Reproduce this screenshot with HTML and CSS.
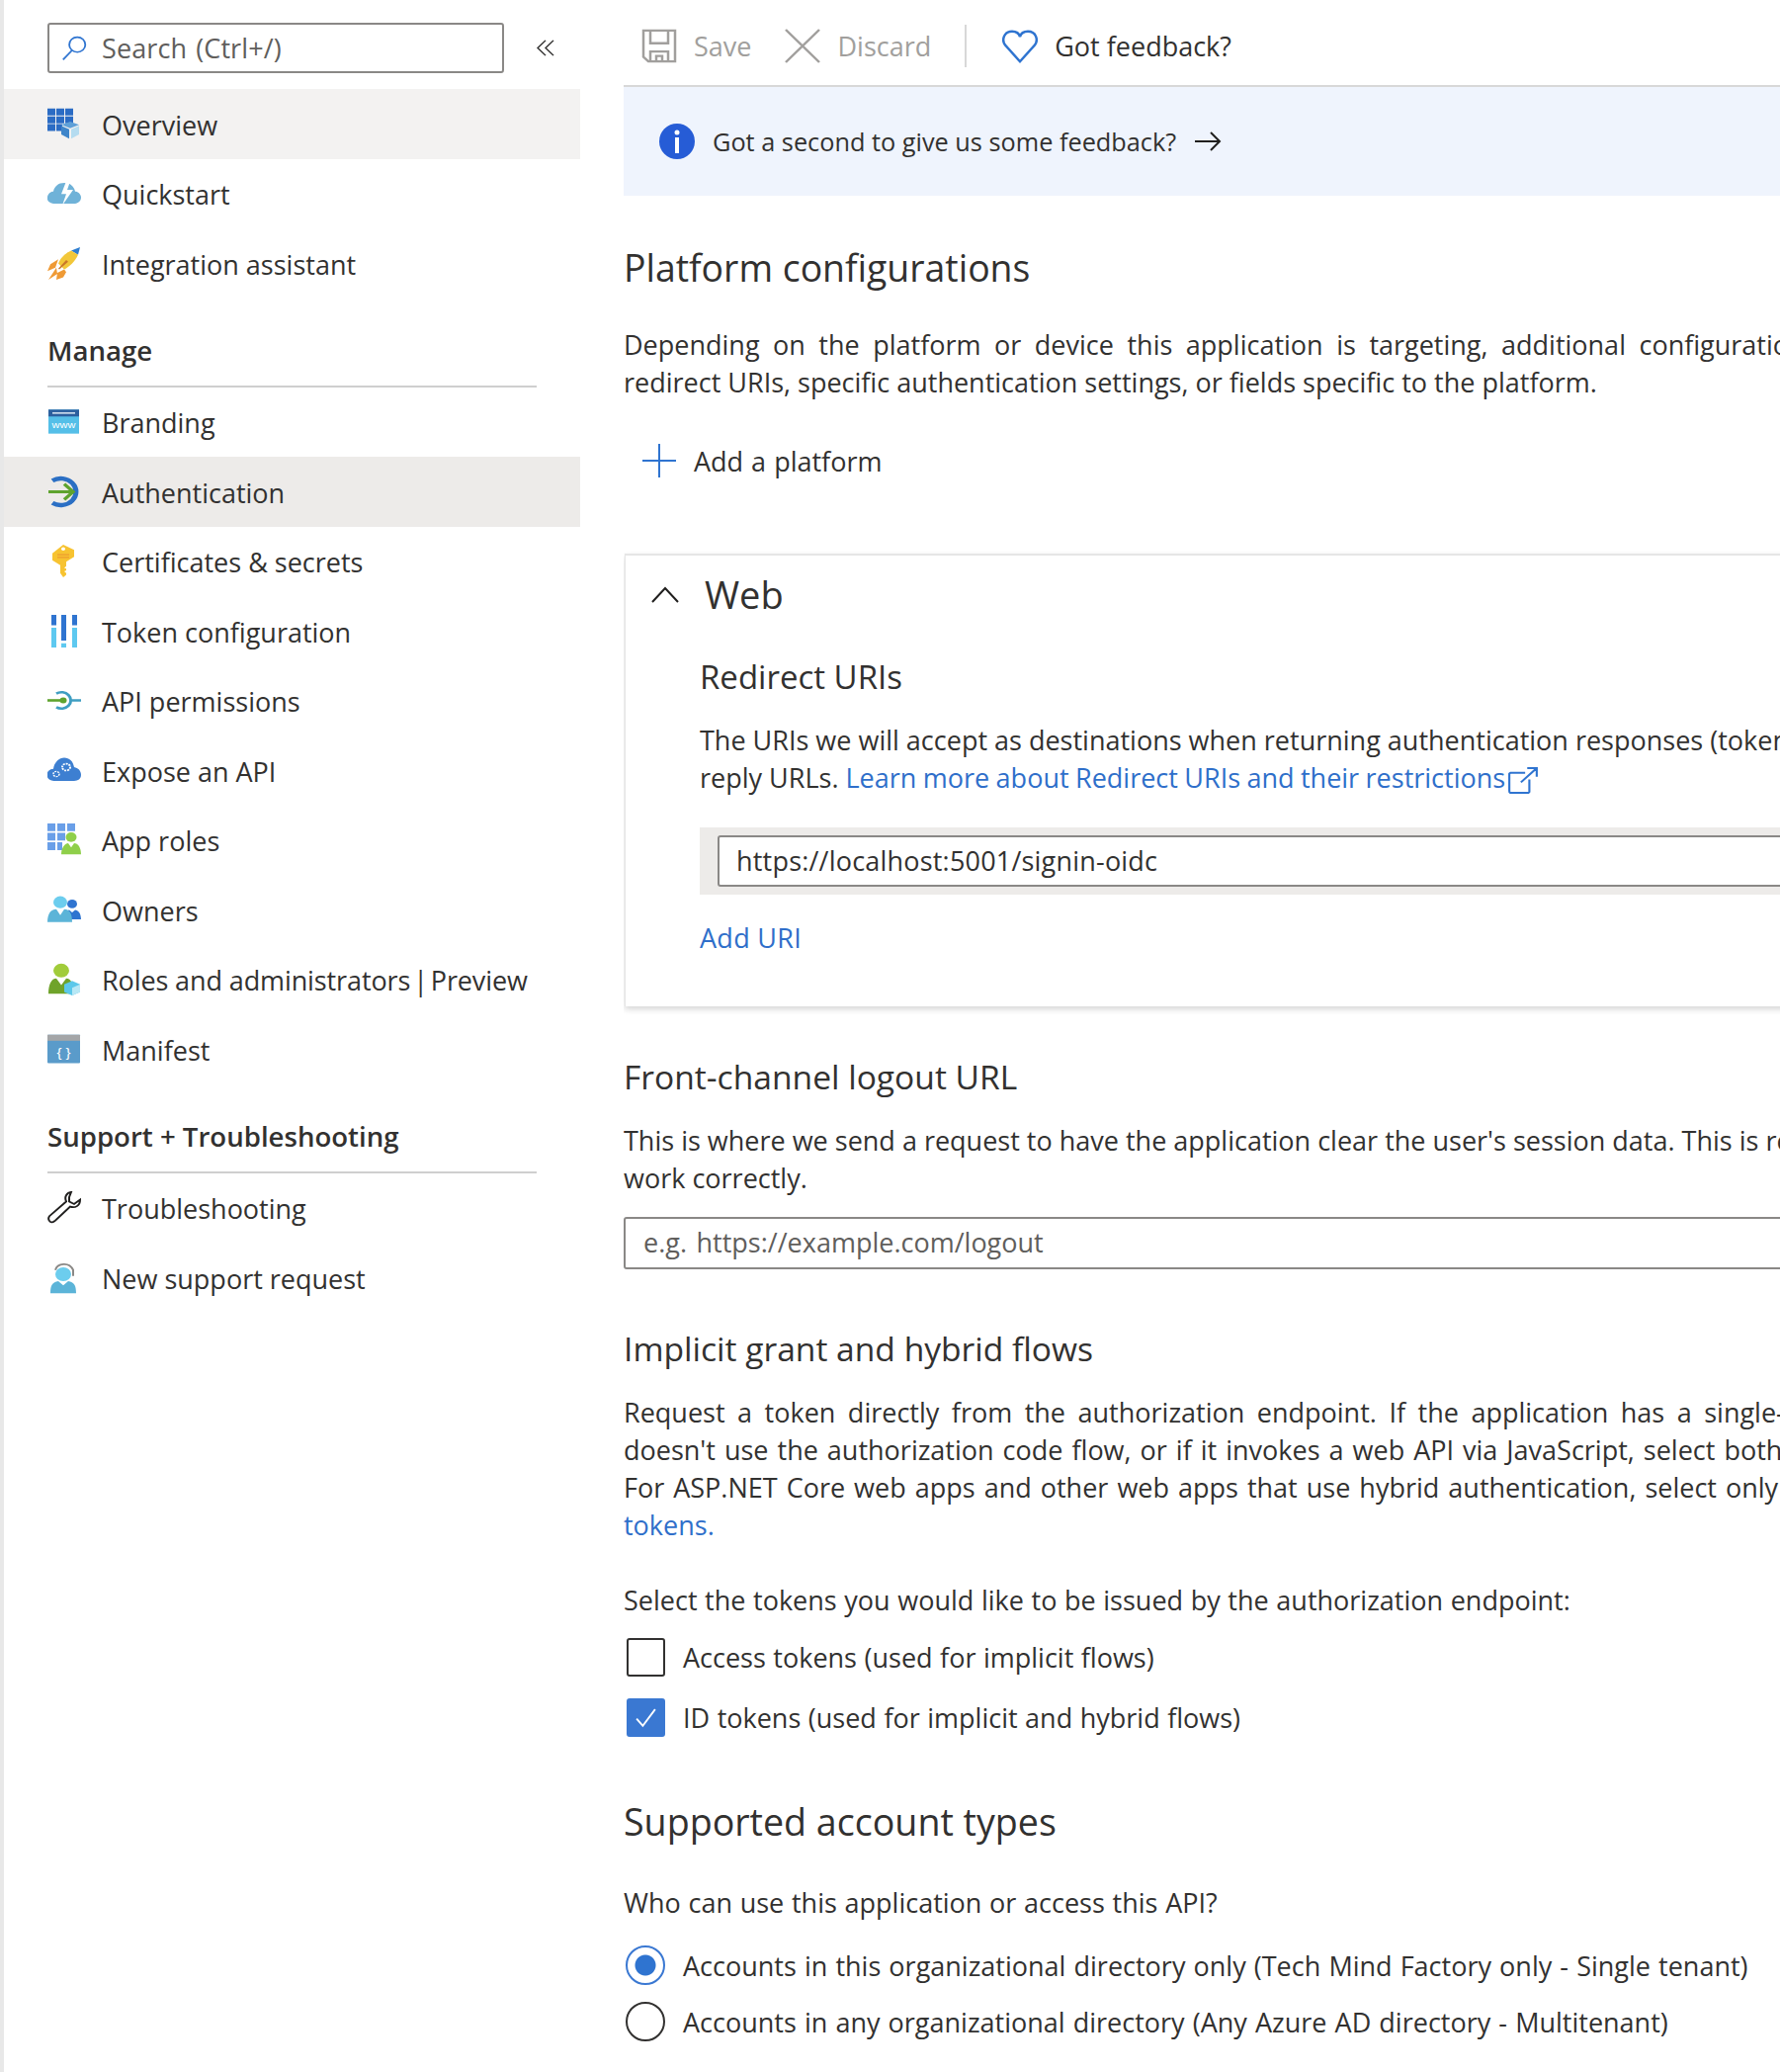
FILE: index.html
```html
<!DOCTYPE html>
<html lang="en">
<head>
  <meta charset="UTF-8">
  <title>Authentication</title>
  <link rel="stylesheet" href="styles.css">
</head>
<body>
  <!-- Left menu -->
  <nav class="sidebar">
    <div class="search-row">
      <div class="search-box">
        <svg class="search-icon" viewBox="0 0 30 32" preserveAspectRatio="none"><circle cx="18" cy="12" r="9" fill="none" stroke="#2f74d0" stroke-width="2"/><path d="M12 19 2 30" stroke="#2f74d0" stroke-width="2" fill="none"/></svg>
        <span>Search (Ctrl+/)</span>
      </div>
      <svg class="collapse-icon" viewBox="0 0 18 20" preserveAspectRatio="none"><path d="M9 1 1 10l8 9M17 1l-8 9 8 9" fill="none" stroke="#323130" stroke-width="1.5"/></svg>
    </div>

    <a class="nav-item hover">
      <svg class="nav-icon" viewBox="0 0 34 38" preserveAspectRatio="none"><path fill="#2b6cc4" d="M0 1h8v8H0zM9 1h8v8H9zM18 1h8v8h-8zM0 10h8v8H0zM9 10h8v8H9zM18 10h8v8h-8zM0 19h8v8H0zM9 19h6v8H9z"/><path fill="#5ea0d8" d="m23 16 9 4-9 4-9-4z"/><path fill="#3f86ca" d="m14 21 8 4v11l-8-5z"/><path fill="#b5dcf0" d="m24 25 8-4v10l-8 5z"/></svg>
      <span>Overview</span>
    </a>
    <a class="nav-item">
      <svg class="nav-icon" viewBox="0 0 34 38" preserveAspectRatio="none"><path fill="#6fb2d8" d="M6 31a6 6 0 0 1-6-7c0-4 3-7 6-7 1-6 5-10 11-10 6 0 10 4 11 10 3 0 6 3 6 7s-3 7-6 7z"/><path fill="#fff" d="M20 2 14 20h5l-4 13 11-18h-6l4-13z"/></svg>
      <span>Quickstart</span>
    </a>
    <a class="nav-item">
      <svg class="nav-icon" viewBox="0 0 34 38" preserveAspectRatio="none"><path fill="#2f7ed0" d="m33 0-2 9-7-5z"/><path fill="#f2c73a" d="M24 4l7 5c-3 8-9 14-14 17l-6-7c2-6 7-12 13-15z"/><path fill="#ef9a35" d="M11 14 3 20l-3 8 8-4zM17 26l-7 4-1 8 7-3 3-6zM9 24l-8 14 9-7z"/><path fill="#c9772a" d="m19 15-8 10 1 1 9-9z"/></svg>
      <span>Integration assistant</span>
    </a>

    <h3 class="nav-heading">Manage</h3>
    <a class="nav-item">
      <svg class="nav-icon" viewBox="0 0 34 38" preserveAspectRatio="none"><rect x="1" y="5" width="31" height="28" fill="#55bfe8"/><rect x="1" y="5" width="31" height="8" fill="#2c5f9e"/><rect x="5" y="8" width="23" height="2" fill="#c8d8ea"/><text x="16.5" y="27" class="icon-text">www</text></svg>
      <span>Branding</span>
    </a>
    <a class="nav-item active">
      <svg class="nav-icon" viewBox="0 0 34 38" preserveAspectRatio="none"><path fill="none" stroke="#2b6fc4" stroke-width="5" d="M5 6a15.500 15.500 0 1 1 0 26"/><path fill="none" stroke="#5ea32e" stroke-width="3.500" d="M1 19h25M17 10l9 9-9 9"/></svg>
      <span>Authentication</span>
    </a>
    <a class="nav-item">
      <svg class="nav-icon" viewBox="0 0 34 38" preserveAspectRatio="none"><path fill="#f7c331" d="M16 0 5 10v8l8 6v9l3 5 3-3v-2l-2-2 2-1v-2l-2-1 2-2v-5l8-6v-8z"/><circle cx="16" cy="5" r="2" fill="#fff"/><path fill="#ee9c2f" d="M10 11h12v1.500H10zM10 14h12v1.500H10z"/></svg>
      <span>Certificates &amp; secrets</span>
    </a>
    <a class="nav-item">
      <svg class="nav-icon" viewBox="0 0 34 38" preserveAspectRatio="none"><path fill="#2f74d0" d="M4 0h5v12H4zM14 0h5v30h-5zM25 0h5v12h-5z"/><path fill="#5ec9f0" d="M4 15h5v23H4zM14 33h5v5h-5zM25 15h5v23h-5z"/></svg>
      <span>Token configuration</span>
    </a>
    <a class="nav-item">
      <svg class="nav-icon" viewBox="0 0 34 38" preserveAspectRatio="none"><path fill="none" stroke="#3f9ec2" stroke-width="3" d="M9 11a9.500 9.500 0 1 1 0 16M24 19h10"/><path fill="none" stroke="#5ea32e" stroke-width="3" d="M0 19h17"/><circle cx="16" cy="19" r="3.500" fill="#5ea32e"/></svg>
      <span>API permissions</span>
    </a>
    <a class="nav-item">
      <svg class="nav-icon" viewBox="0 0 34 38" preserveAspectRatio="none"><path fill="#3d7fd1" d="M7 31a7 7 0 0 1-1-14c1-8 6-13 11-13 5 0 9 4 10 11 4 1 7 4 7 9s-3 7-7 7z"/><circle cx="19" cy="15" r="4" fill="none" stroke="#fff" stroke-width="2" stroke-dasharray="2 1"/><circle cx="9" cy="23" r="3" fill="none" stroke="#fff" stroke-width="1.500" stroke-dasharray="2 1"/></svg>
      <span>Expose an API</span>
    </a>
    <a class="nav-item">
      <svg class="nav-icon" viewBox="0 0 34 38" preserveAspectRatio="none"><path fill="#6a9fe8" d="M0 0h8v9H0zM10 0h8v9h-8zM20 0h8v9h-8zM0 11h8v9H0zM10 11h8v9h-8zM0 22h8v9H0zM10 22h5v9h-5z"/><circle cx="24" cy="16" r="5.500" fill="#8fcf4a"/><path fill="#8fcf4a" d="M14 36c0-8 4-13 7-13l3 5 3-5c4 0 7 5 7 13z"/></svg>
      <span>App roles</span>
    </a>
    <a class="nav-item">
      <svg class="nav-icon" viewBox="0 0 34 38" preserveAspectRatio="none"><circle cx="25" cy="12" r="5" fill="#2f74d0"/><path fill="#2f74d0" d="M17 30c0-7 3-11 5-11l3 3 3-3c3 0 6 4 6 11z"/><circle cx="13" cy="10" r="7" fill="#6ccdee"/><path fill="#5cb4d8" d="M0 33c0-9 3-15 9-15l4 7 4-7c6 0 8 6 8 15z"/></svg>
      <span>Owners</span>
    </a>
    <a class="nav-item">
      <svg class="nav-icon" viewBox="0 0 34 38" preserveAspectRatio="none"><circle cx="14" cy="9" r="8" fill="#a1cc3a"/><path fill="#6fa32a" d="M1 36c0-11 3-18 8-18l5 8 5-8c5 0 7 6 8 18z"/><path fill="#5cc8ea" d="m25 21 8 4v9l-8 4-8-4v-9z"/><path fill="#b8e8f5" d="m25 29 8-4v9l-8 4z"/></svg>
      <span class="tight">Roles and administrators<span class="pipe"> | </span>Preview</span>
    </a>
    <a class="nav-item">
      <svg class="nav-icon" viewBox="0 0 34 38" preserveAspectRatio="none"><rect y="2" width="33" height="33" rx="1" fill="#5a9bca"/><rect y="2" width="33" height="7" fill="#a4a6a8"/><text x="16.500" y="28" class="icon-text braces">{ }</text></svg>
      <span>Manifest</span>
    </a>

    <h3 class="nav-heading">Support + Troubleshooting</h3>
    <a class="nav-item">
      <svg class="nav-icon" viewBox="0 0 34 38" preserveAspectRatio="none"><path fill="none" stroke="#201f1e" stroke-width="2" d="M24 1c-5 1-7 6-5 11L2 29c-2 3 0 8 3 7 1 0 2-1 3-2l15-16c5 2 10-1 10-8l-6 5-5-3 0-5z"/></svg>
      <span>Troubleshooting</span>
    </a>
    <a class="nav-item">
      <svg class="nav-icon" viewBox="0 0 34 38" preserveAspectRatio="none"><path fill="none" stroke="#8a8886" stroke-width="2" d="M8 10c2-8 14-10 18 0v7"/><circle cx="16" cy="15" r="8" fill="#6ccdee"/><path fill="#5cb4d8" d="M3 37c0-9 2-13 8-14l5 5 5-5c6 1 8 5 8 14z"/></svg>
      <span>New support request</span>
    </a>
  </nav>

  <main class="main">
    <div class="toolbar">
      <span class="tool disabled">
        <svg class="tool-icon" viewBox="0 0 36 38" preserveAspectRatio="none"><path fill="none" stroke="#a19f9d" stroke-width="2.500" d="M2 2h32v34H7l-5-5zM9 2v14h18V2M9 36V25h18v11M15 36v-6h6v6"/></svg>
        Save
      </span>
      <span class="tool disabled">
        <svg class="tool-icon" viewBox="0 0 36 38" preserveAspectRatio="none"><path fill="none" stroke="#a19f9d" stroke-width="2.500" d="m1 1 34 36M35 1 1 37"/></svg>
        Discard
      </span>
      <span class="tool-divider"></span>
      <span class="tool">
        <svg class="tool-icon" viewBox="0 0 36 38" preserveAspectRatio="none"><path fill="none" stroke="#2f74d0" stroke-width="2.500" d="M18 36 3 18C-1 12 2 3 10 3c4 0 7 2 8 6 1-4 4-6 8-6 8 0 11 9 7 15z"/></svg>
        Got feedback?
      </span>
    </div>

    <div class="banner">
      <svg class="info-icon" viewBox="0 0 36 36"><circle cx="18" cy="18" r="18" fill="#265cd6"/><circle cx="18" cy="9" r="2.500" fill="#fff"/><rect x="16" y="14" width="4" height="16" fill="#fff"/></svg>
      <span>Got a second to give us some feedback?</span>
      <svg class="arrow-icon" viewBox="0 0 28 20"><path fill="none" stroke="#201f1e" stroke-width="2" d="M1 10h25M17 1l9 9-9 9"/></svg>
    </div>

    <h2 class="title">Platform configurations</h2>
    <p class="text text-under-title"><span class="wide-a">Depending on the platform or device this application is targeting, additional configuration may be required such as</span><br>redirect URIs, specific authentication settings, or fields specific to the platform.</p>

    <div class="add-platform">
      <svg class="plus-icon" viewBox="0 0 34 34"><path fill="none" stroke="#2f74d0" stroke-width="2" d="M17 0v34M0 17h34"/></svg>
      Add a platform
    </div>

    <section class="card">
      <div class="card-head">
        <svg class="chevron" viewBox="0 0 30 18"><path fill="none" stroke="#201f1e" stroke-width="2" d="M2 17 15 3l13 14"/></svg>
        <h2 class="card-title">Web</h2>
      </div>
      <div class="card-body">
        <h3 class="subtitle redirect-title">Redirect URIs</h3>
        <p class="text text-under-sub">The URIs we will accept as destinations when returning authentication responses (tokens) after successfully authenticating<br>reply URLs. <a class="link learn-link">Learn more about Redirect URIs and their restrictions<svg class="ext-icon" viewBox="0 0 30 28" preserveAspectRatio="none"><path fill="none" stroke="#2f74d0" stroke-width="2" d="M17 6H3a2 2 0 0 0-1 1v18a2 2 0 0 0 1 2h17a2 2 0 0 0 1-1V13M13 16 28 1M19 1h9v9"/></svg></a></p>
        <div class="uri-row">
          <div class="uri-input">https://localhost:5001/signin-oidc</div>
        </div>
        <a class="link add-uri">Add URI</a>
      </div>
    </section>

    <h3 class="subtitle section-first">Front-channel logout URL</h3>
    <p class="text after-section">This is where we send a request to have the application clear the user's session data. This is required for single sign-out to<br>work correctly.</p>
    <div class="logout-input">e.g. https://example.com/logout</div>

    <h3 class="subtitle section-second">Implicit grant and hybrid flows</h3>
    <p class="text after-section"><span class="wide-b">Request a token directly from the authorization endpoint. If the application has a single-page architecture (SPA)</span><br><span class="wide-c">doesn't use the authorization code flow, or if it invokes a web API via JavaScript, select both access tokens and ID</span><br><span class="wide-c">For ASP.NET Core web apps and other web apps that use hybrid authentication, select only ID tokens. Learn more about</span><br><a class="link">tokens.</a></p>

    <p class="text select-label">Select the tokens you would like to be issued by the authorization endpoint:</p>
    <label class="check-row first-check">
      <span class="checkbox"></span>
      Access tokens (used for implicit flows)
    </label>
    <label class="check-row second-check">
      <span class="checkbox checked"><svg viewBox="0 0 24 24"><path fill="none" stroke="#fff" stroke-width="1.800" d="m3 13 6 7L21 4"/></svg></span>
      ID tokens (used for implicit and hybrid flows)
    </label>

    <h2 class="title account-title">Supported account types</h2>
    <p class="text who-label">Who can use this application or access this API?</p>
    <label class="check-row first-radio">
      <span class="radio on"></span>
      Accounts in this organizational directory only (Tech Mind Factory only - Single tenant)
    </label>
    <label class="check-row second-radio">
      <span class="radio"></span>
      Accounts in any organizational directory (Any Azure AD directory - Multitenant)
    </label>
  </main>
</body>
</html>
```

FILE: styles.css
```css
html, body {
  margin: 0;
  padding: 0;
  height: 2096px;
  overflow: hidden;
  background: #fff;
}
body {
  display: flex;
  font-family: "Open Sans", sans-serif;
  font-size: 27px;
  color: #323130;
}

/* sidebar */
.sidebar {
  width: 583px;
  flex: none;
  border-left: 4px solid #e8e8e8;
  height: 2096px;
}
.search-row {
  display: flex;
  align-items: center;
  padding: 23px 0 0 44px;
  margin-bottom: 16px;
}
.search-box {
  width: 458px;
  height: 47px;
  border: 2px solid #8a8886;
  border-radius: 3px;
  display: flex;
  align-items: center;
  color: #605e5c;
  word-spacing: 2px;
  letter-spacing: 0.1px;
}
.search-icon {
  width: 27px;
  height: 27px;
  margin: 0 14px 0 12px;
}
.collapse-icon {
  width: 18px;
  height: 17px;
  margin-left: 33px;
}
.nav-item {
  display: flex;
  align-items: center;
  height: 70.5px;
  padding-left: 44px;
}
.nav-item > span { padding-top: 2px; }
.nav-item.hover { background: #f3f2f1; }
.nav-item.active { background: #edebe9; }
.nav-icon {
  width: 34px;
  height: 33px;
  margin-right: 21px;
  flex: none;
}
.icon-text {
  font-family: "Liberation Sans", sans-serif;
  font-size: 11px;
  fill: #fff;
  text-anchor: middle;
}
.icon-text.braces { font-size: 15px; }
.tight { letter-spacing: -0.11px; }
.pipe { word-spacing: -4px; }
.nav-heading {
  font-size: 27.6px;
  font-weight: 600;
  margin: 0 44px;
  height: 56px;
  line-height: 40px;
  padding-top: 32px;
  border-bottom: 2px solid #cfcfcf;
}

/* main column */
.main {
  width: 1170px;
  flex: none;
  margin-left: 44px;
  overflow: hidden;
  white-space: nowrap;
}
.toolbar {
  display: flex;
  align-items: center;
  height: 79px;
  padding: 7px 0 0 18px;
  border-bottom: 2px solid #d8d8d8;
}
.tool {
  display: flex;
  align-items: center;
  margin-right: 34px;
}
.tool.disabled { color: #a19f9d; }
.tool-icon {
  width: 36px;
  height: 35px;
  margin-right: 17px;
}
.tool-divider {
  width: 2px;
  height: 43px;
  background: #d8d8d8;
  margin-right: 36px;
}
.banner {
  display: flex;
  align-items: center;
  height: 110px;
  background: #eff4fd;
  padding-left: 36px;
  font-size: 25.3px;
}
.info-icon {
  width: 36px;
  height: 36px;
  margin-right: 18px;
}
.arrow-icon {
  width: 28px;
  height: 20px;
  margin-left: 18px;
}
.title {
  font-size: 37.4px;
  font-weight: 400;
  line-height: 50px;
  margin: 48px 0 0;
}
.subtitle {
  font-size: 33.6px;
  font-weight: 400;
  line-height: 44px;
  margin: 0;
}
.redirect-title { font-size: 33px; }
.text {
  line-height: 38px;
  margin: 0;
}
.text-under-title { margin-top: 34px; }
.text-under-sub { margin-top: 23px; }
.after-section { margin-top: 24px; }
.wide-a { word-spacing: 6.5px; }
.wide-b { word-spacing: 5.5px; }
.wide-c { word-spacing: 2px; }
.link { color: #2f6fca; }
.learn-link { word-spacing: -0.6px; }
.ext-icon {
  width: 32px;
  height: 27px;
  vertical-align: -6px;
  margin-left: 2px;
}
.add-platform {
  display: flex;
  align-items: center;
  height: 60px;
  margin-top: 30px;
  padding-left: 19px;
  word-spacing: 1px;
}
.plus-icon {
  width: 34px;
  height: 34px;
  margin-right: 18px;
}
.card {
  margin: 64px 0 0 1px;
  height: 458px;
  box-sizing: border-box;
  width: 1400px;
  border-top: 2px solid #e6e6e6;
  border-left: 1px solid #e6e6e6;
  box-shadow: 0 3px 6px rgba(0, 0, 0, 0.16);
  padding-top: 14px;
}
.card-head {
  display: flex;
  align-items: center;
  height: 50px;
  padding-left: 25px;
}
.chevron {
  width: 30px;
  height: 18px;
  margin-right: 25px;
}
.card-title {
  font-size: 38px;
  font-weight: 400;
  margin: 0;
}
.card-body {
  padding: 37px 0 0 75px;
}
.uri-row {
  margin-top: 31px;
  height: 68px;
  box-sizing: border-box;
  background: #edebe9;
  padding: 8px 0 8px 18px;
}
.uri-input, .logout-input {
  height: 52px;
  box-sizing: border-box;
  border: 2px solid #8a8886;
  border-radius: 3px;
  background: #fff;
  line-height: 48px;
  padding-left: 17px;
}
.uri-input { letter-spacing: 0.2px; }
.add-uri {
  display: block;
  margin-top: 25px;
  line-height: 38px;
  letter-spacing: 0.3px;
}
.section-first { margin-top: 49px; }
.logout-input {
  margin-top: 20px;
  height: 53px;
  color: #605e5c;
  padding-left: 18px;
  width: 1400px;
  word-spacing: 2.5px;
}
.section-second { margin-top: 58px; }
.select-label {
  margin-top: 38px;
  word-spacing: 0.6px;
}
.check-row {
  display: flex;
  align-items: center;
  height: 40px;
  word-spacing: 0.5px;
}
.first-check { margin-top: 18px; }
.second-check { margin-top: 21px; }
.first-radio, .second-radio { word-spacing: 1.1px; }
.first-radio { margin-top: 24px; }
.second-radio { margin-top: 17px; }
.checkbox {
  width: 39px;
  height: 39px;
  box-sizing: border-box;
  border: 2px solid #323130;
  border-radius: 3px;
  margin: 0 18px 0 3px;
}
.checkbox.checked {
  background: #3a78d2;
  border-color: #3a78d2;
  padding: 5px;
}
.checkbox svg {
  display: block;
  width: 100%;
  height: 100%;
}
.radio {
  width: 40px;
  height: 40px;
  box-sizing: border-box;
  border: 2px solid #323130;
  border-radius: 50%;
  margin: 0 18px 0 2px;
}
.radio.on {
  border-color: #3a78d2;
  background: radial-gradient(circle, #2f74d0 0 10px, #fff 11px);
}
.account-title {
  margin-top: 61px;
  font-size: 37.6px;
}
.who-label {
  margin-top: 38px;
  word-spacing: 0.7px;
}
```
